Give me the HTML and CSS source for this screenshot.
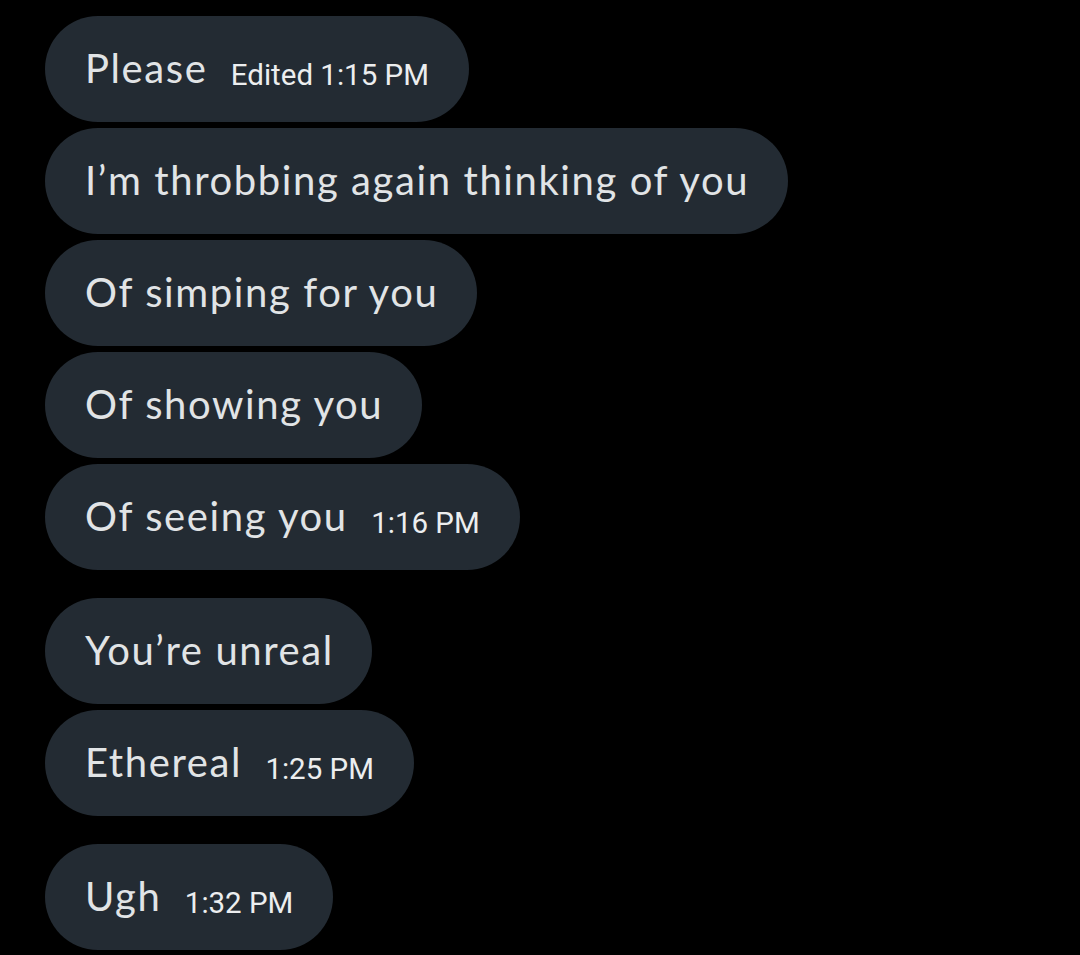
FILE: index.html
```html
<!DOCTYPE html>
<html>
<head>
<meta charset="utf-8">
<link rel="stylesheet" href="styles.css">
</head>
<body>
<div class="chat">
  <div class="group">
    <div class="bubble"><p class="line"><span class="msg">Please</span><span class="time">Edited 1:15 PM</span></p></div>
    <div class="bubble"><p class="line"><span class="msg">I’m throbbing again thinking of you</span></p></div>
    <div class="bubble"><p class="line"><span class="msg">Of simping for you</span></p></div>
    <div class="bubble"><p class="line"><span class="msg">Of showing you</span></p></div>
    <div class="bubble"><p class="line"><span class="msg">Of seeing you</span><span class="time">1:16 PM</span></p></div>
  </div>
  <div class="group">
    <div class="bubble"><p class="line"><span class="msg">You’re unreal</span></p></div>
    <div class="bubble"><p class="line"><span class="msg">Ethereal</span><span class="time">1:25 PM</span></p></div>
  </div>
  <div class="group">
    <div class="bubble"><p class="line"><span class="msg">Ugh</span><span class="time">1:32 PM</span></p></div>
  </div>
</div>
</body>
</html>
```
FILE: styles.css
```css
html, body {
  margin: 0;
  padding: 0;
  background: #000;
}
body {
  width: 1080px;
  height: 955px;
  overflow: hidden;
}
.chat {
  display: flex;
  flex-direction: column;
  gap: 28px;
  padding: 16px 0 0 45px;
}
.group {
  display: flex;
  flex-direction: column;
  align-items: flex-start;
  gap: 6px;
}
.bubble {
  box-sizing: border-box;
  height: 106px;
  padding: 0 40px;
  border-radius: 53px;
  background: #232b33;
  display: flex;
  align-items: center;
  white-space: nowrap;
}
.line {
  margin: 0;
  line-height: 48px;
  padding-top: 8px;
}
.msg {
  font-family: Lato, "Open Sans", sans-serif;
  font-weight: 400;
  font-size: 40px;
  letter-spacing: 1.6px;
  color: #e1e4e6;
  margin-right: -1.6px;
}
.time {
  font-family: Roboto, "Liberation Sans", sans-serif;
  font-size: 29.5px;
  color: #eceeef;
  margin-left: 25px;
  vertical-align: -2px;
}
```
